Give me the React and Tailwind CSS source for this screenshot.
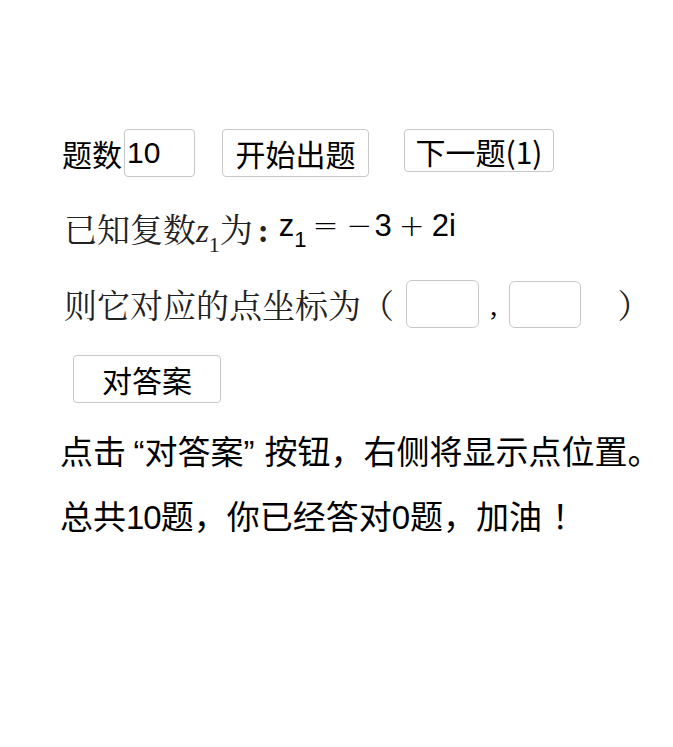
import React from 'react';

const sans = { fontFamily: '"Noto Sans CJK SC", "Liberation Sans", sans-serif' };
const serif = { fontFamily: '"Noto Serif CJK SC", "Liberation Serif", "Noto Sans CJK SC", serif' };

const Comma = () => <span className="inline-block w-[33px]">，</span>;

const App = () => {
  return (
    <div className="min-h-screen bg-white text-black" style={sans}>
      <div className="pl-[60px] pt-[129px]">
        {/* Question count + controls */}
        <div className="flex items-start h-[48px]">
          <span className="text-[30px] leading-[48px] pl-[2px]">题数</span>
          <input
            defaultValue="10"
            className="ml-[2px] w-[71px] h-[48px] border border-[#c8c8c8] rounded-[4px] px-[2px] text-[30px] outline-none font-['Liberation_Sans',sans-serif]"
          />
          <button className="ml-[27px] w-[147px] h-[48px] border border-[#c8c8c8] rounded-[4px] bg-white text-[30px] leading-none">
            开始出题
          </button>
          <button className="ml-[35px] w-[150px] h-[43px] border border-[#c8c8c8] rounded-[4px] bg-white text-[30px] leading-none">
            下一题(1)
          </button>
        </div>

        {/* Given complex number */}
        <div className="flex items-start mt-[26px] pl-[4px] h-[50px]">
          <span className="text-[33px] leading-[50px] text-[#222] whitespace-nowrap" style={serif}>
            已知复数<i className="font-['Liberation_Serif',serif]">z</i><sub className="text-[22px] font-['Liberation_Serif',serif] align-[-4px]">1</sub>为<span className="ml-[5px] font-bold font-['Liberation_Serif',serif]">:</span>
          </span>
          <span className="ml-[10px] text-[31px] leading-[44px] font-['Liberation_Sans',sans-serif] whitespace-nowrap">
            z<sub className="text-[22px] align-[-5px]">1</sub>
            <span className="inline-block w-[38px] text-center font-['DejaVu_Sans',sans-serif] font-extralight">=</span>
            <span className="inline-block w-[30px] text-center font-['DejaVu_Sans',sans-serif] font-extralight">−</span>
            3
            <span className="inline-block w-[40px] text-center font-['DejaVu_Sans',sans-serif] font-extralight">+</span>
            2i
          </span>
        </div>

        {/* Point coordinates */}
        <div className="flex items-center mt-[27px] pl-[4px] h-[48px]">
          <span className="text-[33px] text-[#222]" style={serif}>
            则它对应的点坐标为（
          </span>
          <input className="ml-[12px] w-[73px] h-[48px] border border-[#c8c8c8] rounded-[6px] outline-none text-[28px] px-1" />
          <span className="text-[30px] mx-[11px] font-['Liberation_Serif',serif]">,</span>
          <input className="w-[72px] h-[47px] border border-[#c8c8c8] rounded-[6px] outline-none text-[28px] px-1" />
          <span className="text-[33px] ml-[37px] text-[#222]" style={serif}>）</span>
        </div>

        {/* Check answer */}
        <div className="mt-[27px] pl-[13px]">
          <button className="w-[148px] h-[48px] border border-[#c8c8c8] rounded-[4px] bg-white text-[30px] leading-none">
            对答案
          </button>
        </div>

        <p className="mt-[16px] text-[33px] leading-[63px] whitespace-nowrap">
          点击 <span className="font-['Liberation_Sans',sans-serif]">“</span>对答案<span className="font-['Liberation_Sans',sans-serif] mr-[10px]">”</span>按钮<Comma />右侧将显示点位置。
        </p>
        <p className="text-[33px] leading-[63px] whitespace-nowrap">
          总共<span className="font-['Liberation_Sans',sans-serif] tracking-[-1px]">10</span>题<Comma />你已经答对<span className="font-['Liberation_Sans',sans-serif]">0</span>题<Comma />加油<span className="inline-block pl-[10px]">！</span>
        </p>
      </div>
    </div>
  );
};

export default App;
